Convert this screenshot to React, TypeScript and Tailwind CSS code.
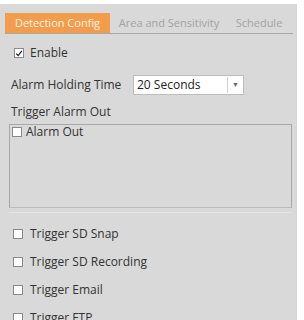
import React from 'react'

function Box({ checked = false }: { checked?: boolean }) {
  return (
    <span className="flex h-[10px] w-[10px] items-center justify-center border border-[#8a8a8a] bg-white">
      {checked && (
        <svg viewBox="0 0 10 10" className="h-[9px] w-[9px]">
          <path d="M1.5 5.2 L4 7.6 L8.6 1.8" fill="none" stroke="#222" strokeWidth="1.6" />
        </svg>
      )}
    </span>
  )
}

const triggers = ['Trigger SD Snap', 'Trigger SD Recording', 'Trigger Email', 'Trigger FTP']

export default function App() {
  return (
    <div
      className="h-[320px] w-[304px] overflow-hidden bg-white pt-[4px] text-[12px] text-[#333]"
      style={{ fontFamily: '"Open Sans", "Liberation Sans", sans-serif' }}
    >
      <div className="h-full w-[297px] bg-[#d9d9d9] pl-[5px] pr-[4px] pt-[9px]">
        {/* tabs */}
        <div className="flex h-[21px] items-stretch border-b border-[#a8a8a8] text-[11px]">
          <div className="flex w-[105px] items-center justify-center bg-[#f29c4c] text-[#fff4ea]">
            Detection Config
          </div>
          <div className="flex w-[118px] items-center justify-center text-[#a3a3a3]">
            Area and Sensitivity
          </div>
          <div className="flex w-[62px] items-center justify-center text-[#a3a3a3]">
            Schedule
          </div>
        </div>

        <div className="pl-[6px]">
          <label className="mt-[11px] flex h-[16px] items-center gap-[6px] pl-[3px]">
            <Box checked />
            <span>Enable</span>
          </label>

          <div className="mt-[14px] flex items-center">
            <span className="w-[122px]">Alarm Holding Time</span>
            <div className="flex h-[20px] w-[111px] items-center border border-[#bdbdbd] bg-white">
              <span className="flex-1 pl-[3px] text-[#222]">20 Seconds</span>
              <span className="flex h-[16px] w-[16px] items-center justify-center border-l border-[#d0d0d0] text-[7px] text-[#666]">
                ▼
              </span>
            </div>
          </div>

          <div className="mt-[9px] h-[16px] leading-[16px]">Trigger Alarm Out</div>

          <div className="mt-[4px] h-[84px] w-[283px] -ml-[2px] border border-[#a8a8a8] border-b-[#bcbcbc] pl-[2px]">
            <label className="flex items-center gap-[4px] leading-[14px]">
              <Box />
              <span>Alarm Out</span>
            </label>
          </div>
          <div className="-ml-[2px] mt-[4px] h-px w-[283px] bg-[#e4e4e4]" />

          <div className="mt-[13px] flex flex-col gap-[12px] pl-[2px]">
            {triggers.map((t) => (
              <label key={t} className="flex h-[16px] items-center gap-[7px]">
                <Box />
                <span>{t}</span>
              </label>
            ))}
          </div>
        </div>
      </div>
    </div>
  )
}
